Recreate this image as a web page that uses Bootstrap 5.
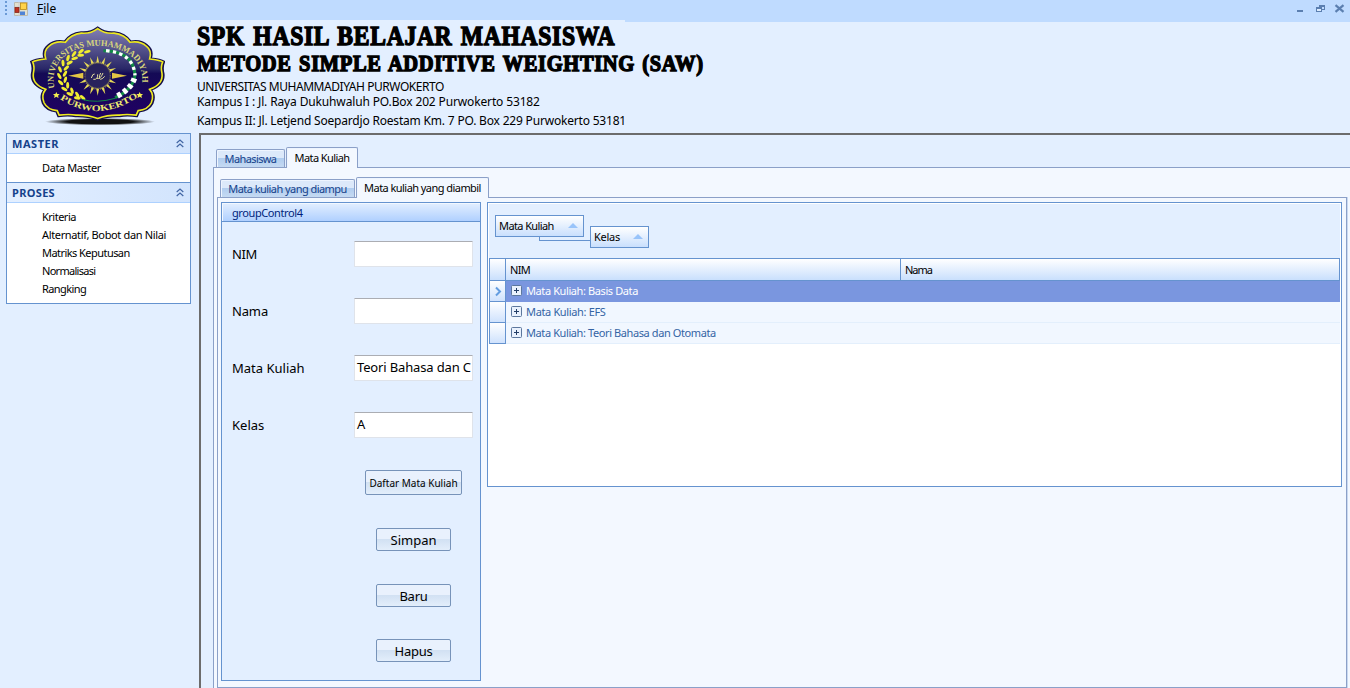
<!DOCTYPE html>
<html lang="id">
<head>
<meta charset="utf-8">
<title>SPK Hasil Belajar Mahasiswa</title>
<link rel="stylesheet" href="https://cdn.jsdelivr.net/npm/bootstrap@5.3.0/dist/css/bootstrap.min.css">
<style>
body{width:1350px;height:688px;overflow:hidden;background:#e3efff;font:11px/18px "Noto Sans","Open Sans",sans-serif;color:#000}
.t{white-space:nowrap;display:inline-block}
.menubar{height:22px;background:#bfdbff;padding:0 3px 0 5px}
.grip{width:2px;height:15px;margin-top:1px;background:repeating-linear-gradient(#6b9ad6 0 2px,transparent 2px 4px)}
.appicon{margin:2px 0 0 7px}
.filemenu{font-size:12px;margin-left:9px}
.headband{height:111px}
.brandcol{width:191px;padding:4px 0 0 30px}
.titles{width:434px;margin-top:-2px;padding-left:6px;background:#e3efff;height:113px;white-space:nowrap}
.titles h1,.titles h2{font-family:"Liberation Serif",serif;font-weight:700;margin:0;-webkit-text-stroke:1.4px #000;word-spacing:2px}
.titles h1{font-size:27px;line-height:33px}
.titles h2{font-size:23px;line-height:22px}
.titles h1 .t{transform:scaleX(.874);transform-origin:0 0;letter-spacing:.8px}
.titles h2 .t{transform:scaleX(.892);transform-origin:0 0;letter-spacing:.7px}
.titles p{font-size:12px;line-height:15px;margin:0}
.univ{letter-spacing:-.45px}.kampus1{letter-spacing:-.14px}.kampus2{letter-spacing:-.19px}
.wide1{letter-spacing:.54px}.wide2{letter-spacing:.33px}
.s1{letter-spacing:-.15px}.s2{letter-spacing:-.25px}.s3{letter-spacing:-.35px}.s4{letter-spacing:-.4px}
.s5{letter-spacing:-.5px}.s55{letter-spacing:-.55px}.s6{letter-spacing:-.6px}.s7{letter-spacing:-.72px}.s10{letter-spacing:-1px}
.sidecol{width:199px;padding-left:6px}
.navbox{width:185px;height:171px;border:1px solid #6593cf;background:#fff}
.navhead{height:20px;border-bottom:1px solid #add1ff;background:linear-gradient(90deg,#e3efff,#d2e4fd);color:#15428b;font-weight:700;padding:0 6px 0 5px}
.navhead.second{border-top:1px solid #6593cf;height:21px}
.navitem{padding:5px 0 0 35px}
.navitem.single{height:28px}
.mainpane{border-left:2px solid #6c6c6c;border-top:2px solid #6c6c6c;height:555px;padding:12px 0 0 12px}
.tabrow{height:21px;position:relative;z-index:2;padding-left:3px}
.tb{border:1px solid #8ba0c8;border-bottom:0;border-radius:2px 2px 0 0;text-align:center;height:18px;line-height:17px;margin-bottom:1px;color:#15428b;background:linear-gradient(#dce9fa 0 45%,#b1cdef 50%,#c5daf3);box-shadow:inset 1px 1px #eef5ff}
.tb.on{height:21px;color:#000;background:#f3f8ff;line-height:20px;margin:0 0 0 1px}
.tab-a{width:69px}.tab-b{width:72px}.tab-c{width:135px}.tab-d{width:133px}
.page1{border:1px solid #8ba0c8;border-right:0;border-bottom:0;margin-top:-1px;background:#f3f8ff;padding:9px 3px 0 3px;height:521px}
.page2{border:1px solid #8ba0c8;box-shadow:1px 0 #c9d9f0;margin-top:-1px;background:#f3f8ff;padding:4px 4px 0 3px;height:491px;width:1130px}
.grp{width:260px;height:479px;border:1px solid #6593cf;background:#e3efff}
.grphead{height:19px;border-bottom:1px solid #6593cf;background:linear-gradient(#e3efff,#b0d0ff);box-shadow:inset 1px 1px #f3f8ff;color:#001f7c;padding-left:10px;line-height:20px}
.fields{padding-top:19px}
.frow{height:26px;margin-bottom:31px;padding:0 7px 0 10px;font-size:13px}
.inp{width:119px;height:26px;border:1px solid #dfe3ea;border-top-color:#abadb3;border-radius:1px;background:#fff;padding-left:2px;line-height:23px;white-space:nowrap}
.bt{border:1px solid #7793b9;border-radius:2px;width:75px;height:23px;font-size:13px;line-height:22px;color:#000;background:linear-gradient(#e9f1fd 0 48%,#d2e1f3 50%,#e3eefb);margin:33px 0 0 154px}
.bt.daftar{width:97px;height:25px;margin:32px 0 0 143px;font-size:10px;line-height:24px}
.bt.last{margin-top:32px}
.gridbox{width:855px;height:285px;border:1px solid #6593cf;background:#fff;margin-left:6px;padding:1px}
.gpanel{height:54px;background:#e3efff;position:relative}
.chip{position:absolute;height:22px;border:1px solid #6593cf;background:linear-gradient(#fff,#c9dffd);padding:0 5px 0 3px;line-height:20px}
.chip-a{left:6px;top:11px;width:89px}.chip-b{left:101px;top:22px;width:59px}
.chip i{border:5px solid transparent;border-top:0;border-bottom-color:#99c4fa;width:0;height:0;margin-top:-2px}
.link1{position:absolute;left:50px;top:32px;width:52px;height:5px;border:1px solid #6593cf;border-width:0 0 1px 1px}
.grow{height:21px;border-bottom:1px solid #e3effc;background:#f1f7ff;color:#3464a4;line-height:20px}
.grow svg{width:20px;height:20px}
.ghead{height:23px;border:1px solid #6593cf;background:linear-gradient(#fff,#c9dffd);line-height:22px}
.hc{padding-left:4px}.hc0{width:16px;border-right:1px solid #6593cf}.hc1{width:395px;border-right:1px solid #6593cf}
.ind{width:17px;height:21px;border:1px solid #6593cf;border-top:0;background:linear-gradient(#fff,#cfe2fd)}
.sel{background:#7a96df;color:#fff;border-color:#7a96df}
</style>
</head>
<body>
<svg class="d-none"><defs>
  <g id="pl"><rect x="5.500" y="4.500" width="10" height="10" rx="1" fill="#e9f1fd" stroke="#5c779d"/><path d="M8 9.500h5M10.500 7v5" stroke="#233d66"/></g>
  <path id="chev" d="M.7 4l3.300-3 3.300 3M.7 8l3.300-3 3.300 3" fill="none" stroke="#4165a4" stroke-width="1.200"/>
</defs></svg>
<header class="menubar d-flex">
  <div class="grip"></div>
  <svg class="appicon" width="14" height="14" viewBox="0 0 14 14"><path d="M.5.5h13v13H.5z" fill="#e3e0cf" stroke="#bbb9b0"/><path d="M.5 5h13M5 0v14" stroke="#ccc"/><rect x="1" y="5.500" width="4" height="5" fill="#c03020" stroke="#83261e" stroke-width=".8"/><rect x="6.500" y="1" width="6" height="6.500" fill="#ffd34a" stroke="#b98b13" stroke-width=".8"/><rect x="6" y="9.500" width="5" height="3.500" fill="#4f83d6"/></svg>
  <span class="filemenu"><span class="t"><u>F</u>ile</span></span>
  <svg class="ms-auto" width="52" height="20" viewBox="0 0 52 20"><g shape-rendering="crispEdges"><path fill="#5b7fb0" d="M2 10h6v2H2zM24 5h6v5h-3v-2h-3z"/><path d="M25 7h4v2h-4" fill="#bfdbff"/><path fill="#5b7fb0" d="M21 7h6v5h-6z"/><path d="M22 9h4v2h-4z" fill="#dcecff"/></g><path d="M40.500 5.200l8 6.600M48.500 5.200l-8 6.600" stroke="#5b7fb0" stroke-width="2.200" fill="none"/></svg>
</header>
<div class="headband d-flex">
  <div class="brandcol">
  <svg width="135" height="100" viewBox="90 77 405 300">
    <defs>
      <linearGradient id="blue" x1="0" y1="0" x2="0" y2="1"><stop offset="0" stop-color="#8380b4"/><stop offset=".45" stop-color="#292767"/><stop offset=".5" stop-color="#140a55"/><stop offset="1" stop-color="#210064"/></linearGradient>
      <radialGradient id="shade"><stop offset=".6" stop-color="#111"/><stop offset="1" stop-color="#111" stop-opacity="0"/></radialGradient>
      <path id="arcTop" d="M164 263C125 94 461 94 424 263"/>
      <path id="arcBot" d="M180 296Q293 370 411 292"/>
      <path id="badge" d="M293 82Q270 99 243 96Q211 99 194 124Q163 118 144 136Q126 150 134 175Q104 178 94 184Q101 200 96 220Q92 253 134 268Q119 285 129 309Q139 330 169 333L175 347Q205 343 227 347Q262 346 293 357Q324 346 359 347Q381 343 411 347L417 333Q447 330 457 309Q467 285 452 268Q494 253 490 220Q485 200 492 184Q482 178 452 175Q460 150 442 136Q423 118 392 124Q375 99 343 96Q316 99 293 82Z"/>
      <path id="ray" d="M293 226l-5-36 5-24 5 24z"/>
      <path id="ray2" d="M293 226l-4-30 4-14 4 14z"/>
      <ellipse id="leaf" rx="10" ry="4.500"/>
    </defs>
    <ellipse cx="300" cy="364" rx="165" ry="11" fill="url(#shade)"/>
    <use href="#badge" fill="url(#blue)" stroke="#15104a" stroke-width="7"/>
    <use href="#badge" fill="none" stroke="#eeea20" stroke-width="5" transform="translate(5.900 4.400) scale(.98)"/>
    <g fill="#d8d67c" font-family="Liberation Serif,serif" font-weight="700" font-size="26"><text textLength="408" lengthAdjust="spacingAndGlyphs"><textPath href="#arcTop">UNIVERSITAS MUHAMMADIYAH</textPath></text><text textLength="250" lengthAdjust="spacingAndGlyphs" fill="#eeea70"><textPath href="#arcBot">PURWOKERTO</textPath></text></g>
    <path d="M169 275l3 6 7 0-5 5 2 7-7-4-7 4 2-7-5-5 7 0zM419 275l3 6 7 0-5 5 2 7-7-4-7 4 2-7-5-5 7 0z" fill="#f2ef50"/>
    <g fill="#f0ec30">
      <use href="#leaf" transform="translate(262 154) rotate(-15)"/><use href="#leaf" transform="translate(243 153) rotate(-40)"/><use href="#leaf" transform="translate(242 165) rotate(-5)"/><use href="#leaf" transform="translate(222 161) rotate(-55)"/><use href="#leaf" transform="translate(224 174) rotate(-15)"/><use href="#leaf" transform="translate(204 173) rotate(-75)"/><use href="#leaf" transform="translate(209 187) rotate(-30)"/><use href="#leaf" transform="translate(189 188) rotate(-95)"/><use href="#leaf" transform="translate(199 203) rotate(-45)"/><use href="#leaf" transform="translate(180 207) rotate(-110)"/><use href="#leaf" transform="translate(195 220) rotate(-60)"/><use href="#leaf" transform="translate(178 227) rotate(-120)"/><use href="#leaf" transform="translate(196 238) rotate(-75)"/><use href="#leaf" transform="translate(182 247) rotate(-135)"/><use href="#leaf" transform="translate(203 255) rotate(-90)"/><use href="#leaf" transform="translate(193 266) rotate(-150)"/><use href="#leaf" transform="translate(216 271) rotate(-105)"/><use href="#leaf" transform="translate(209 281) rotate(-160)"/><use href="#leaf" transform="translate(232 283) rotate(-120)"/><use href="#leaf" transform="translate(232 293) rotate(-170)"/><use href="#leaf" transform="translate(248 292) rotate(-140)"/>
    </g>
    <path d="M310 151Q402 152 405 225Q398 270 345 292" fill="none" stroke="#128847" stroke-width="9"/>
    <path d="M318 151Q400 158 405 225" fill="none" stroke="#fff" stroke-width="10" stroke-dasharray="10 10"/>
    <path d="M403 234Q393 266 350 288" fill="none" stroke="#fff" stroke-width="17" stroke-dasharray="12 9"/>
    <path d="M245 297Q290 310 345 294" fill="none" stroke="#128847" stroke-width="3"/>
    <g fill="#e6d957">
      <use href="#ray"/><use href="#ray" transform="rotate(45 293 226)"/><use href="#ray" transform="rotate(135 293 226)"/><use href="#ray" transform="rotate(180 293 226)"/><use href="#ray" transform="rotate(225 293 226)"/><use href="#ray" transform="rotate(315 293 226)"/>
      <use href="#ray" transform="rotate(22.500 293 226)"/><use href="#ray" transform="rotate(67.500 293 226)"/><use href="#ray" transform="rotate(112.500 293 226)"/><use href="#ray" transform="rotate(157.500 293 226)"/><use href="#ray" transform="rotate(202.500 293 226)"/><use href="#ray" transform="rotate(247.500 293 226)"/><use href="#ray" transform="rotate(292.500 293 226)"/><use href="#ray" transform="rotate(337.500 293 226)"/>
      <use href="#ray2" transform="rotate(11 293 226)"/><use href="#ray2" transform="rotate(34 293 226)"/><use href="#ray2" transform="rotate(56 293 226)"/><use href="#ray2" transform="rotate(124 293 226)"/><use href="#ray2" transform="rotate(146 293 226)"/><use href="#ray2" transform="rotate(169 293 226)"/><use href="#ray2" transform="rotate(191 293 226)"/><use href="#ray2" transform="rotate(214 293 226)"/><use href="#ray2" transform="rotate(236 293 226)"/><use href="#ray2" transform="rotate(304 293 226)"/><use href="#ray2" transform="rotate(326 293 226)"/><use href="#ray2" transform="rotate(349 293 226)"/>
    </g>
    <path d="M205 226l45-9v18zM381 226l-45-9v18z" fill="#e2c545"/>
    <circle cx="293" cy="226" r="38" fill="#28225c" stroke="#6a6054" stroke-width="4" stroke-dasharray="3 2"/>
    <path d="M274 233q4-14 10-12M280 237q14 2 13-15M291 234q10 4 18-16M302 218q-8 16 0 19q7-2 12-9" fill="none" stroke="#e5df9e" stroke-width="3"/>
  </svg>
  </div>
  <div class="titles">
    <h1><span class="t">SPK HASIL BELAJAR MAHASISWA</span></h1>
    <h2><span class="t">METODE SIMPLE ADDITIVE WEIGHTING (SAW)</span></h2>
    <p class="mt-1"><span class="t univ">UNIVERSITAS MUHAMMADIYAH PURWOKERTO</span></p>
    <p><span class="t kampus1">Kampus I : Jl. Raya Dukuhwaluh PO.Box 202 Purwokerto 53182</span></p>
    <p class="mt-1"><span class="t kampus2">Kampus II: Jl. Letjend Soepardjo Roestam Km. 7 PO. Box 229 Purwokerto 53181</span></p>
  </div>
</div>
<div class="d-flex">
  <aside class="sidecol flex-shrink-0">
    <div class="navbox">
      <div class="navhead d-flex justify-content-between align-items-center"><span class="t wide1">MASTER</span><svg width="8" height="9"><use href="#chev"/></svg></div>
      <div class="navitem single"><span class="t s4">Data Master</span></div>
      <div class="navhead second d-flex justify-content-between align-items-center"><span class="t wide2">PROSES</span><svg width="8" height="9"><use href="#chev"/></svg></div>
      <div class="navitem">
        <div><span class="t s5">Kriteria</span></div>
        <div><span class="t s3">Alternatif, Bobot dan Nilai</span></div>
        <div><span class="t s55">Matriks Keputusan</span></div>
        <div><span class="t s7">Normalisasi</span></div>
        <div><span class="t s6">Rangking</span></div>
      </div>
    </div>
  </aside>
  <main class="mainpane flex-grow-1">
    <div class="tabrow d-flex align-items-end"><div class="tb tab-a"><span class="t s6">Mahasiswa</span></div><div class="tb on tab-b"><span class="t s6">Mata Kuliah</span></div></div>
    <div class="page1">
      <div class="tabrow d-flex align-items-end"><div class="tb tab-c"><span class="t s55">Mata kuliah yang diampu</span></div><div class="tb on tab-d"><span class="t s55">Mata kuliah yang diambil</span></div></div>
      <div class="page2 d-flex">
        <section class="grp flex-shrink-0">
          <div class="grphead"><span class="t s4">groupControl4</span></div>
          <div class="fields">
            <div class="frow d-flex justify-content-between align-items-center"><span class="t s3">NIM</span><div class="inp"></div></div>
            <div class="frow d-flex justify-content-between align-items-center"><span class="t s1">Nama</span><div class="inp"></div></div>
            <div class="frow d-flex justify-content-between align-items-center"><span class="t">Mata Kuliah</span><div class="inp"><span class="t s1">Teori Bahasa dan C</span></div></div>
            <div class="frow d-flex justify-content-between align-items-center"><span class="t">Kelas</span><div class="inp">A</div></div>
          </div>
          <div class="bt daftar d-flex justify-content-center"><span class="t">Daftar Mata Kuliah</span></div>
          <div class="bt d-flex justify-content-center"><span class="t">Simpan</span></div>
          <div class="bt d-flex justify-content-center"><span class="t s2">Baru</span></div>
          <div class="bt last d-flex justify-content-center"><span class="t s2">Hapus</span></div>
        </section>
        <section class="gridbox flex-shrink-0">
          <div class="gpanel">
            <div class="link1"></div>
            <div class="chip chip-a d-flex justify-content-between align-items-center"><span class="t s6">Mata Kuliah</span><i></i></div>
            <div class="chip chip-b d-flex justify-content-between align-items-center"><span class="t s2">Kelas</span><i></i></div>
          </div>
          <div class="ghead d-flex"><div class="hc0"></div><div class="hc hc1"><span class="t s7">NIM</span></div><div class="hc"><span class="t s10">Nama</span></div></div>
          <div class="d-flex"><div class="ind"><svg class="d-block" width="15" height="20" viewBox="0 0 15 20"><path d="M6 6.500l4 4-4 4" fill="none" stroke="#649de0" stroke-width="2"/></svg></div><div class="grow sel flex-grow-1 d-flex"><svg><use href="#pl"/></svg><span class="t s4">Mata Kuliah: Basis Data</span></div></div>
          <div class="d-flex"><div class="ind"></div><div class="grow flex-grow-1 d-flex"><svg><use href="#pl"/></svg><span class="t s3">Mata Kuliah: EFS</span></div></div>
          <div class="d-flex"><div class="ind"></div><div class="grow flex-grow-1 d-flex"><svg><use href="#pl"/></svg><span class="t s4">Mata Kuliah: Teori Bahasa dan Otomata</span></div></div>
        </section>
      </div>
    </div>
  </main>
</div>
<script src="https://cdn.jsdelivr.net/npm/bootstrap@5.3.0/dist/js/bootstrap.bundle.min.js"></script>
</body>
</html>
